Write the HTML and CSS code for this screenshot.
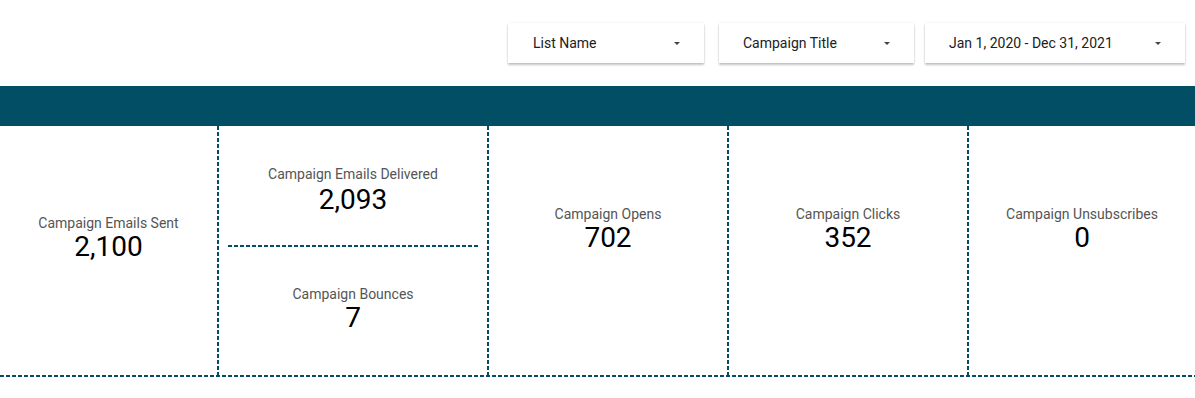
FILE: index.html
```html
<!DOCTYPE html>
<html>
<head>
<meta charset="utf-8">
<link rel="stylesheet" href="styles.css">
</head>
<body>
<div class="page">
  <header class="controls">
    <div class="dropdown dd-list"><span>List Name</span><span class="caret"></span></div>
    <div class="dropdown dd-title"><span>Campaign Title</span><span class="caret"></span></div>
    <div class="dropdown dd-date"><span>Jan 1, 2020 - Dec 31, 2021</span><span class="caret"></span></div>
  </header>
  <div class="banner"></div>
  <section class="cards">
    <div class="col col-sent">
      <div class="card card-low">
        <div class="label">Campaign Emails Sent</div>
        <div class="value">2,100</div>
      </div>
    </div>
    <div class="col col-split">
      <div class="card card-top">
        <div class="label">Campaign Emails Delivered</div>
        <div class="value">2,093</div>
      </div>
      <div class="divider"></div>
      <div class="card card-bottom">
        <div class="label">Campaign Bounces</div>
        <div class="value">7</div>
      </div>
    </div>
    <div class="col col-mid">
      <div class="card card-mid">
        <div class="label">Campaign Opens</div>
        <div class="value">702</div>
      </div>
    </div>
    <div class="col col-mid">
      <div class="card card-mid">
        <div class="label">Campaign Clicks</div>
        <div class="value">352</div>
      </div>
    </div>
    <div class="col col-last">
      <div class="card card-mid">
        <div class="label">Campaign Unsubscribes</div>
        <div class="value">0</div>
      </div>
    </div>
  </section>
</div>
</body>
</html>
```

FILE: styles.css
```css
* { box-sizing: border-box; }
html, body { margin: 0; padding: 0; background: #ffffff; }
body { font-family: Roboto, "Liberation Sans", Arial, sans-serif; }

.page { width: 1195px; }

.controls {
  height: 86px;
  display: flex;
  justify-content: flex-end;
  align-items: flex-start;
  padding: 23px 10px 0 0;
}

.dropdown {
  height: 40px;
  display: flex;
  align-items: center;
  justify-content: space-between;
  padding: 0 24px 0 25px;
  background: #fff;
  font-size: 14px;
  color: #202124;
  box-shadow: 0 2px 2px rgba(0,0,0,0.22), 0 0 2px rgba(0,0,0,0.10);
}
.dd-list { width: 196px; margin-right: 15px; }
.dd-title { width: 195px; margin-right: 11px; padding-left: 24px; }
.dd-date { width: 260px; padding-left: 24px; }

.caret {
  width: 0;
  height: 0;
  border-left: 3px solid transparent;
  border-right: 3px solid transparent;
  border-top: 3px solid #444;
  margin-top: 1px;
}

.banner { height: 40px; background: #024f65; }

.cards {
  display: grid;
  grid-template-columns: 219px 270px 240px 240px 226px;
  height: 251px;
  background-image: repeating-linear-gradient(to right, #024f65 0 4px, transparent 4px 6px);
  background-size: 100% 2px;
  background-repeat: no-repeat;
  background-position: 0 bottom;
}

.col {
  display: flex;
  flex-direction: column;
  padding: 0 2px 2px 0;
  background-image: repeating-linear-gradient(to bottom, #024f65 0 4px, transparent 4px 6px);
  background-size: 2px 100%;
  background-repeat: no-repeat;
  background-position: right 0;
}
.col-last { background-image: none; padding-right: 0; }

.card {
  display: flex;
  flex-direction: column;
  align-items: center;
  text-align: center;
}
.card-low { padding-top: 89px; }
.card-mid { padding-top: 80px; }
.card-top { height: 119px; padding-top: 40px; }
.card-bottom { padding-top: 39px; }

.divider {
  height: 2px;
  margin: 0 9px 0 9px;
  background-image: repeating-linear-gradient(to right, #024f65 0 4px, transparent 4px 6px);
}

.label {
  font-size: 14px;
  line-height: 16px;
  color: #555;
}
.value {
  font-size: 28px;
  line-height: 32px;
  color: #000;
}
.card-top .value { margin-top: 2px; }
```
